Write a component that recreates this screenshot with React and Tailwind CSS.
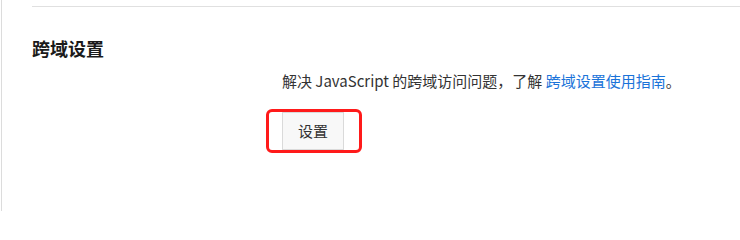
export default function App() {
  return (
    <div
      className="w-[740px] h-[211px] bg-white overflow-hidden flex"
      style={{ fontFamily: '"Noto Sans", "Noto Sans CJK SC", sans-serif' }}
    >
      <div className="w-px ml-px h-full bg-[#dcdcdc]" />
      <div className="flex-1 flex flex-col pl-[30px]">
        <div className="mt-[6px] h-px bg-[#e0e0e0]" />
        <h2 className="mt-[29px] text-[18px] leading-[24px] font-bold text-[#1a1a1a]" style={{ fontFamily: '"Noto Sans CJK SC", sans-serif' }}>
          跨域设置
        </h2>
        <div className="ml-[250px] mt-[10px] flex flex-col items-start">
          <p className="text-[15px] leading-[22px] text-[#333]" style={{ fontFamily: '"Noto Sans CJK SC", sans-serif' }}>
            解决 JavaScript 的跨域访问问题，了解{" "}
            <a className="text-[#1a73d9]">跨域设置使用指南</a>。
          </p>
          <div className="relative mt-[20px]">
            <button
              className="w-[62px] h-[38px] bg-[#f8f8f8] border border-[#dadada] text-[15px] text-[#333] flex items-center justify-center"
              style={{ fontFamily: '"Noto Sans CJK SC", sans-serif' }}
            >
              设置
            </button>
            <div className="absolute left-[-16px] top-[-3px] w-[96px] h-[44px] border-[3.5px] border-[#ff1a1a] rounded-[6px] pointer-events-none" />
          </div>
        </div>
      </div>
    </div>
  );
}
